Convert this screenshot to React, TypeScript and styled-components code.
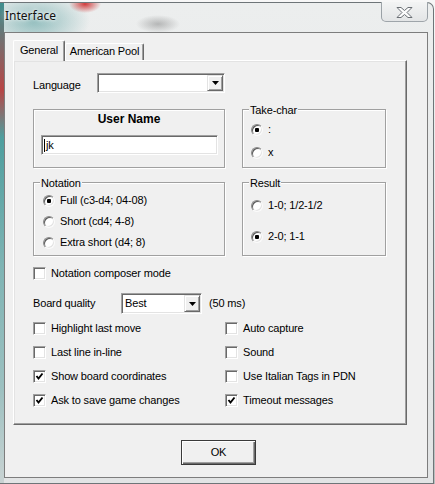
import React from 'react';
import styled, { createGlobalStyle } from 'styled-components';

const GlobalStyle = createGlobalStyle`
  html, body {
    margin: 0;
    padding: 0;
  }
  body {
    width: 435px;
    height: 484px;
    overflow: hidden;
    background: linear-gradient(to bottom, #f7f7f7 0, #e4e6e6 40%, #b9bdbd 100%);
    font-family: "Liberation Sans", Arial, sans-serif;
    font-size: 11px;
    letter-spacing: -0.15px;
    color: #000;
  }
`;

const Window = styled.div`
  box-sizing: border-box;
  width: 434px;
  height: 482px;
  margin-top: 2px;
  border: 1px solid #6e7578;
  border-left: none;
  border-radius: 0 7px 0 0;
  padding: 0 5px 5px 4px;
  display: flex;
  flex-direction: column;
  background:
    linear-gradient(to bottom, #3f8f8f 0, #b84545 18%, #4e9e9e 28%, #7fb4b4 55%, #9cc0c0 80%, #c9d3d3 100%) 0 0 / 4px 100% no-repeat,
    radial-gradient(ellipse 16px 9px at 85px 1px, rgba(205, 40, 40, 0.9), transparent),
    radial-gradient(ellipse 55px 30px at 35px 18px, rgba(70, 150, 150, 0.55), transparent),
    radial-gradient(ellipse 22px 9px at 158px 21px, rgba(80, 80, 80, 0.35), transparent),
    linear-gradient(to bottom, #eceeee, #e2e4e5);
`;

const TitleBar = styled.div`
  height: 29px;
  display: flex;
  align-items: flex-start;
`;

const Title = styled.div`
  padding: 5px 0 0 1px;
  font-family: "Noto Sans", "Open Sans", sans-serif;
  font-size: 12px;
  letter-spacing: 0;
  line-height: 16px;
  color: #111;
  text-shadow: 0 0 6px #fff, 0 0 3px #fff;
`;

const CloseButton = styled.div`
  box-sizing: border-box;
  margin: -1px 0 0 auto;
  width: 47px;
  height: 20px;
  border: 1px solid rgba(90, 100, 110, 0.55);
  border-top: none;
  border-radius: 0 0 5px 5px;
  background: linear-gradient(to bottom, #f3f4f4, #e3e5e6);
  display: flex;
  align-items: center;
  justify-content: center;
  padding-top: 1px;
`;

const Client = styled.div`
  box-sizing: border-box;
  width: 424px;
  height: 446px;
  border: 1px solid #7d7d7d;
  background: #f0f0f0;
  padding: 7px 0 0 8px;
`;

const TabStrip = styled.div`
  display: flex;
  align-items: flex-end;
  height: 20px;
  position: relative;
  z-index: 1;
`;

const Tab = styled.div<{ $active?: boolean; $width: number }>`
  box-sizing: border-box;
  width: ${(p) => p.$width}px;
  height: ${(p) => (p.$active ? '21px' : '17px')};
  margin-bottom: ${(p) => (p.$active ? '-1px' : '0')};
  padding-top: ${(p) => (p.$active ? '3px' : '1px')};
  background: #f0f0f0;
  border: 1px solid;
  border-bottom: none;
  border-color: #fff #696969 #696969 #fff;
  border-radius: 2px 2px 0 0;
  box-shadow: inset -1px 0 0 #a0a0a0;
  line-height: 13px;
  text-align: center;
  white-space: nowrap;
`;

const Panel = styled.div`
  box-sizing: border-box;
  width: 394px;
  height: 365px;
  border: 1px solid;
  border-color: #fff #696969 #696969 #fff;
  box-shadow: inset -1px -1px 0 #a0a0a0, inset 1px 1px 0 #e3e3e3;
  padding: 12px 0 0 19px;
  display: flex;
  flex-direction: column;
`;

const FieldRow = styled.div<{ $top?: number; $height?: number }>`
  display: flex;
  align-items: center;
  height: ${(p) => p.$height ?? 20}px;
  margin-top: ${(p) => p.$top ?? 0}px;
`;

const Label = styled.span<{ $width?: number; $shift?: number; $gap?: number }>`
  width: ${(p) => (p.$width ? `${p.$width}px` : 'auto')};
  padding-top: ${(p) => p.$shift ?? 0}px;
  margin-left: ${(p) => p.$gap ?? 0}px;
  line-height: 13px;
  white-space: nowrap;
`;

const Combo = styled.div<{ $width: number; $height?: number }>`
  box-sizing: border-box;
  width: ${(p) => p.$width}px;
  height: ${(p) => p.$height ?? 20}px;
  border: 1px solid;
  border-color: #a0a0a0 #fff #fff #a0a0a0;
  box-shadow: inset 1px 1px 0 #696969, inset -1px -1px 0 #e3e3e3;
  background: #fff;
  display: flex;
  align-items: center;
  padding: 1px 1px 1px 3px;
`;

const ComboText = styled.span`
  flex: 1;
  line-height: 13px;
`;

const ComboButton = styled.div`
  box-sizing: border-box;
  width: 16px;
  height: 100%;
  background: #f0f0f0;
  border: 1px solid;
  border-color: #e3e3e3 #696969 #696969 #e3e3e3;
  box-shadow: inset 1px 1px 0 #fff, inset -1px -1px 0 #a0a0a0;
  display: flex;
  align-items: center;
  justify-content: center;
`;

const GroupGrid = styled.div`
  margin-top: 16px;
  display: grid;
  grid-template-columns: 192px 144px;
  grid-template-rows: 59px 74px;
  column-gap: 17px;
  row-gap: 14px;
`;

const Group = styled.div<{ $padTop: number; $gap: number; $padLeft?: number }>`
  position: relative;
  box-sizing: border-box;
  border: 1px solid #a0a0a0;
  box-shadow: 1px 1px 0 #fff, inset 1px 1px 0 #fff;
  padding: ${(p) => p.$padTop}px 0 0 ${(p) => p.$padLeft ?? 8}px;
  display: flex;
  flex-direction: column;
  gap: ${(p) => p.$gap}px;
`;

const Legend = styled.span`
  position: absolute;
  top: -6px;
  left: 6px;
  padding: 0 1px;
  background: #f0f0f0;
  line-height: 13px;
`;

const GroupTitle = styled.div`
  text-align: center;
  font-weight: bold;
  font-size: 12px;
  letter-spacing: 0;
  line-height: 14px;
  padding-top: 2px;
`;

const TextBox = styled.div`
  box-sizing: border-box;
  margin: 9px 0 0 7px;
  width: 177px;
  height: 20px;
  border: 1px solid;
  border-color: #a0a0a0 #fff #fff #a0a0a0;
  box-shadow: inset 1px 1px 0 #696969, inset -1px -1px 0 #e3e3e3;
  background: #fff;
  display: flex;
  align-items: center;
  padding-left: 2px;
  line-height: 13px;
`;

const Caret = styled.span`
  width: 1px;
  height: 13px;
  background: #000;
  margin-right: 1px;
`;

const Option = styled.div`
  display: flex;
  align-items: center;
  gap: 5px;
  height: 13px;
  line-height: 13px;
  white-space: nowrap;
`;

const RadioCircle = styled.span<{ $checked?: boolean }>`
  position: relative;
  box-sizing: border-box;
  width: 12px;
  height: 12px;
  border-radius: 50%;
  background: #fff;
  border: 1px solid;
  border-color: #8a8a8a #fafafa #fafafa #8a8a8a;
  box-shadow: inset 1px 1px 0 #5a5a5a, inset -1px -1px 0 #e3e3e3;

  &::after {
    content: '';
    display: ${(p) => (p.$checked ? 'block' : 'none')};
    position: absolute;
    left: 3px;
    top: 3px;
    width: 4px;
    height: 4px;
    border-radius: 1px;
    background: #000;
  }
`;

const CheckBox = styled.span`
  box-sizing: border-box;
  width: 13px;
  height: 13px;
  flex-shrink: 0;
  background: #fff;
  border: 1px solid;
  border-color: #a0a0a0 #fff #fff #a0a0a0;
  box-shadow: inset 1px 1px 0 #696969, inset -1px -1px 0 #e3e3e3;
  display: flex;
  align-items: center;
  justify-content: center;
`;

const CheckGrid = styled.div`
  margin-top: 8px;
  display: grid;
  grid-template-columns: 192px auto;
  row-gap: 11px;
`;

const Footer = styled.div`
  padding: 15px 0 0 168px;
`;

const Button = styled.div`
  box-sizing: border-box;
  width: 75px;
  height: 25px;
  border: 1px solid #3a3a3a;
  background: #f0f0f0;
  box-shadow: inset 1px 1px 0 #fff, inset -1px -1px 0 #696969, inset -2px -2px 0 #a0a0a0;
  display: flex;
  align-items: center;
  justify-content: center;
  line-height: 13px;
`;

function CloseGlyph() {
  return (
    <svg width="17" height="11" viewBox="0 0 17 11">
      <polygon
        points="1,0.5 5,0.5 8.5,3.5 12,0.5 16,0.5 11,5.5 16,10.5 12,10.5 8.5,7.5 5,10.5 1,10.5 6,5.5"
        fill="#fdfdfd"
        stroke="#6a6f74"
        strokeWidth="1"
        strokeLinejoin="round"
      />
    </svg>
  );
}

function Arrow() {
  return (
    <svg width="7" height="4" viewBox="0 0 7 4">
      <polygon points="0,0 7,0 3.5,4" fill="#000" />
    </svg>
  );
}

function Check({ checked, children }: { checked?: boolean; children: React.ReactNode }) {
  return (
    <Option>
      <CheckBox>
        {checked && (
          <svg width="9" height="9" viewBox="0 0 9 9">
            <polyline points="1.5,4 3.5,6.5 7.5,1.5" fill="none" stroke="#000" strokeWidth="1.9" />
          </svg>
        )}
      </CheckBox>
      {children}
    </Option>
  );
}

function Radio({ checked, children }: { checked?: boolean; children: React.ReactNode }) {
  return (
    <Option>
      <RadioCircle $checked={checked} />
      {children}
    </Option>
  );
}

function App() {
  return (
    <>
      <GlobalStyle />
      <Window>
        <TitleBar>
          <Title>Interface</Title>
          <CloseButton>
            <CloseGlyph />
          </CloseButton>
        </TitleBar>
        <Client>
          <TabStrip>
            <Tab $active $width={52}>General</Tab>
            <Tab $width={79}>American Pool</Tab>
          </TabStrip>
          <Panel>
            <FieldRow>
              <Label $width={64} $shift={4}>Language</Label>
              <Combo $width={128}>
                <ComboText />
                <ComboButton>
                  <Arrow />
                </ComboButton>
              </Combo>
            </FieldRow>

            <GroupGrid>
              <Group $padTop={0} $gap={0} $padLeft={0}>
                <GroupTitle>User Name</GroupTitle>
                <TextBox>
                  <Caret />
                  jk
                </TextBox>
              </Group>
              <Group $padTop={13} $gap={10}>
                <Legend>Take-char</Legend>
                <Radio checked>:</Radio>
                <Radio>x</Radio>
              </Group>
              <Group $padTop={11} $gap={8} $padLeft={9}>
                <Legend>Notation</Legend>
                <Radio checked>Full (c3-d4; 04-08)</Radio>
                <Radio>Short (cd4; 4-8)</Radio>
                <Radio>Extra short (d4; 8)</Radio>
              </Group>
              <Group $padTop={16} $gap={18}>
                <Legend>Result</Legend>
                <Radio>1-0; 1/2-1/2</Radio>
                <Radio checked>2-0; 1-1</Radio>
              </Group>
            </GroupGrid>

            <FieldRow $top={11} $height={13}>
              <Check>Notation composer mode</Check>
            </FieldRow>

            <FieldRow $top={13} $height={21}>
              <Label $width={88}>Board quality</Label>
              <Combo $width={81} $height={21}>
                <ComboText>Best</ComboText>
                <ComboButton>
                  <Arrow />
                </ComboButton>
              </Combo>
              <Label $gap={7}>(50 ms)</Label>
            </FieldRow>

            <CheckGrid>
              <Check>Highlight last move</Check>
              <Check>Auto capture</Check>
              <Check>Last line in-line</Check>
              <Check>Sound</Check>
              <Check checked>Show board coordinates</Check>
              <Check>Use Italian Tags in PDN</Check>
              <Check checked>Ask to save game changes</Check>
              <Check checked>Timeout messages</Check>
            </CheckGrid>
          </Panel>
          <Footer>
            <Button>OK</Button>
          </Footer>
        </Client>
      </Window>
    </>
  );
}

export default App;
